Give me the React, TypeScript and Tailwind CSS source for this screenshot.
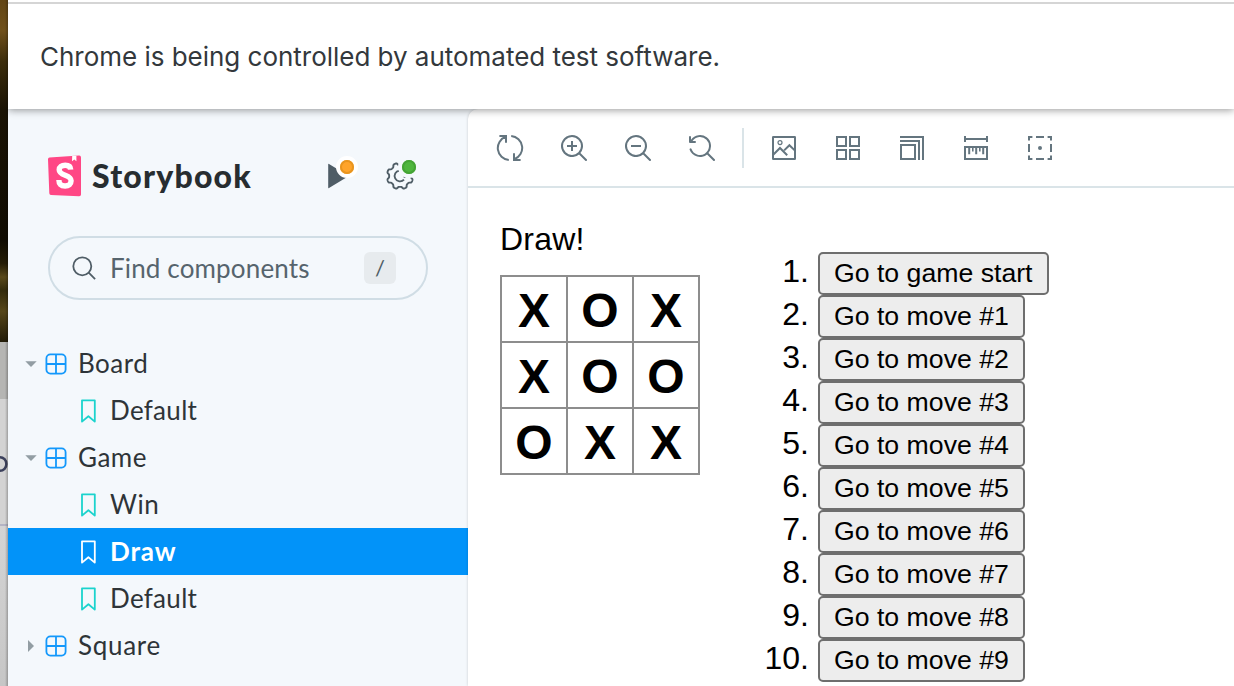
import type { ReactNode } from 'react';

function Icon({ children }: { children: ReactNode }) {
  return (
    <svg className="size-7 shrink-0" viewBox="0 0 14 14" fill="none" stroke="#64757f" strokeWidth="1">
      {children}
    </svg>
  );
}

function gearPath() {
  const pts: string[] = [];
  for (let i = 0; i <= 160; i++) {
    const a = (i / 160) * Math.PI * 2;
    const wave = Math.tanh(2 * Math.cos(8 * a + Math.PI)) / Math.tanh(2);
    const r = 12 + 1.15 * wave;
    pts.push(`${(14 + r * Math.cos(a)).toFixed(2)} ${(14 + r * Math.sin(a)).toFixed(2)}`);
  }
  return `M${pts.join('L')}Z`;
}

function Lens() {
  return (
    <path
      fill="#64757f"
      stroke="none"
      fillRule="evenodd"
      d="M9.544 10.206a5.5 5.5 0 11.662-.662.5.5 0 01.148.102l3 3a.5.5 0 01-.708.708l-3-3a.5.5 0 01-.102-.148zM10.5 6a4.5 4.5 0 11-9 0 4.5 4.5 0 019 0z"
    />
  );
}

function Toolbar() {
  return (
    <div className="flex h-[79px] shrink-0 items-center gap-9 border-b-2 border-[#dae4e8] pl-7">
      <Icon>
        <path d="M1.7 1H5v3.4M4.8 1.4A6 6 0 0 0 6.4 13M12.3 13H9V9.6M9.2 12.6A6 6 0 0 0 7.6 1" />
      </Icon>
      <Icon>
        <Lens />
        <path d="M6 3.5v5M3.5 6h5" />
      </Icon>
      <Icon>
        <Lens />
        <path d="M3.5 6h5" />
      </Icon>
      <Icon>
        <path
          fill="#64757f"
          stroke="none"
          d="M1.5 2.837V1.5a.5.5 0 00-1 0V4a.5.5 0 00.5.5h2.5a.5.5 0 000-1H2.258a4.5 4.5 0 11-.496 4.016.5.5 0 10-.942.337 5.502 5.502 0 008.724 2.353.5.5 0 00.102.148l3 3a.5.5 0 00.708-.708l-3-3a.5.5 0 00-.148-.102A5.5 5.5 0 101.5 2.837z"
        />
      </Icon>
      <div className="-mx-[10px] h-10 w-[2px] bg-[#dae4e8]" />
      <Icon>
        <rect x="1.5" y="1.5" width="11" height="11" rx=".1" />
        <circle cx="5" cy="4.3" r="1" strokeWidth=".6" />
        <path d="M1.6 10.4L5 7l3.6 3.6M7.1 8.2L9.7 5.6l2.8 2.7" />
      </Icon>
      <Icon>
        <path d="M1.5 1.5H6V6H1.5zM8 1.5h4.5V6H8zM1.5 8H6v4.5H1.5zM8 8h4.5v4.5H8z" />
      </Icon>
      <Icon>
        <path d="M1 1.5h11.5V13M1 3.5h9.5V13M1.5 5.5h7v7h-7z" />
      </Icon>
      <Icon>
        <path d="M1.5 1v3M12.5 1v3M1.5 2.5h11M1.5 6.5h11v6h-11zM3.6 6.5v3.6M7.1 6.5v3.6M10.6 6.5v3.6" />
        <path d="M5.4 6.5v2.2M8.9 6.5v2.2" strokeWidth=".8" />
      </Icon>
      <Icon>
        <path d="M1.5 3.2V1.5h1.7M10.8 1.5h1.7v1.7M12.5 10.8v1.7h-1.7M3.2 12.5H1.5v-1.7M5 1.5h4M5 12.5h4M1.5 5v4M12.5 5v4" />
        <circle cx="7" cy="7" r="1" fill="#64757f" stroke="none" />
      </Icon>
    </div>
  );
}

function ComponentRow({ name, nameClass, open = true }: { name: string; nameClass: string; open?: boolean }) {
  return (
    <div className="flex h-[47px] items-center pl-[17px]">
      <svg className="h-3 w-3" viewBox="0 0 12 12" fill="#929da3">
        {open ? <path d="M.3 3.3h11.4L6 9z" /> : <path d="M3 0l6 6-6 6z" />}
      </svg>
      <svg className="ml-2 size-[22px]" viewBox="0 0 22 22" fill="none" stroke="#1398fb" strokeWidth="1.8">
        <rect x="1.4" y="1.4" width="19.2" height="19.2" rx="4" />
        <path d="M11 1v20M1 11h20" />
      </svg>
      <span
        className={`ml-[11px] whitespace-nowrap pb-[2px] text-[26px] leading-none text-[#2e3438] ${nameClass}`}
      >
        {name}
      </span>
    </div>
  );
}

function StoryRow({ name, nameClass, selected = false }: { name: string; nameClass: string; selected?: boolean }) {
  return (
    <div className={`flex h-[47px] items-center pl-[73px] ${selected ? 'bg-[#0293f9]' : ''}`}>
      <svg className="h-6 w-[15px]" viewBox="0 0 15 24" fill="none" stroke={selected ? '#fff' : '#1bd3cd'} strokeWidth="1.8">
        <path d="M1 1.3h12.8v21.3L7.4 17.3 1 22.6z" strokeLinejoin="round" />
      </svg>
      <span
        className={`ml-[14px] whitespace-nowrap pb-[2px] text-[26px] leading-none ${selected ? 'font-bold text-white' : 'text-[#2e3438]'} ${nameClass}`}
      >
        {name}
      </span>
    </div>
  );
}

function Sidebar() {
  return (
    <aside className="flex w-[460px] shrink-0 flex-col font-[Lato,sans-serif]">
      <div className="mt-[45px] flex h-11 items-center pl-10">
        <svg className="h-[42px] w-[34px]" viewBox="0 0 34 42">
          <path d="M0 4.2Q0 2.7 1.5 2.6L31 .6Q33 .5 33 2.4V39.5Q33 41.4 31 41.3L3 40Q1.4 39.9 1.3 38.3Z" fill="#ff4785" />
          <path d="M24.2 1L28.4.7V6.2L26.3 4.6 24 6.3z" fill="#fff" />
          <path
            d="M22.7 14.6C22.6 11.3 20.6 10.2 17.2 10.2c-3.6 0-6 1.6-6 4.6 0 6.4 11.9 4.7 11.9 11 0 3.2-2.4 5.2-6 5.2-4.2 0-6.2-1.9-6.2-6"
            fill="none"
            stroke="#fff"
            strokeWidth="5.4"
          />
        </svg>
        <span className="ml-[10px] w-[160px] whitespace-nowrap text-[32px] font-black leading-none tracking-[1.2px] text-[#272d30]">
          Storybook
        </span>
        <div className="relative ml-[72px] h-7 w-7">
          <svg className="size-7" viewBox="0 0 28 28">
            <path d="M4.2 2.4Q4.2 1.5 5 2L24 13.4q1 .6 0 1.2L5 26q-.8.5-.8-.4z" fill="#4f5d66" />
          </svg>
          <span className="absolute -top-[6px] left-[12px] size-[22px] rounded-full border-4 border-white bg-[#ffa42a]">
            <span className="block size-full rounded-full border-2 border-[#e8951f]" />
          </span>
        </div>
        <div className="relative ml-[34px] h-7 w-7">
          <svg className="size-7" viewBox="0 0 28 28" fill="none" stroke="#4f5d66" strokeWidth="1.9">
            <path d={gearPath()} strokeLinejoin="round" />
            <path d="M13.4 8.6a5.4 5.4 0 1 0 4.6 9M18.4 15.8l.4-1.8" />
          </svg>
          <span className="absolute -top-[6px] left-[12px] size-[22px] rounded-full border-4 border-[#f4f8fc] bg-[#4eb63d]">
            <span className="block size-full rounded-full border-2 border-[#44a335]" />
          </span>
        </div>
      </div>
      <div className="ml-10 mt-[38px] flex h-16 w-[380px] items-center rounded-full border-2 border-[#d0dde5] pl-[22px]">
        <svg className="size-6" viewBox="0 0 24 24" fill="none" stroke="#4f5d66" strokeWidth="1.8">
          <circle cx="10.3" cy="10.3" r="9" />
          <path d="M16.7 16.7l6.4 6.4" />
        </svg>
        <span className="ml-[14px] w-[240px] whitespace-nowrap text-[26px] leading-none tracking-[0.15px] text-[#56646d]">
          Find components
        </span>
        <span className="ml-[14px] flex size-8 items-center justify-center rounded-[6px] bg-[#e7ebee] text-[22px] leading-none text-[#4f5d66]">
          /
        </span>
      </div>
      <nav className="mt-10 flex flex-col">
        <ComponentRow name="Board" nameClass="tracking-[0.5px]" />
        <StoryRow name="Default" nameClass="tracking-[0.3px]" />
        <ComponentRow name="Game" nameClass="tracking-[0.5px]" />
        <StoryRow name="Win" nameClass="tracking-[0.6px]" />
        <StoryRow name="Draw" nameClass="tracking-[0.9px]" selected />
        <StoryRow name="Default" nameClass="tracking-[0.3px]" />
        <ComponentRow name="Square" nameClass="tracking-[0.7px]" open={false} />
      </nav>
    </aside>
  );
}

const board = ['X', 'O', 'X', 'X', 'O', 'O', 'O', 'X', 'X'];
const moves = ['Go to game start', ...Array.from({ length: 9 }, (_, i) => `Go to move #${i + 1}`)];

function Game() {
  return (
    <div className="flex pl-8 font-['Liberation_Sans',Arial,sans-serif] text-black">
      <div className="w-[200px] pt-[32px]">
        <div className="h-[55px] text-[32px] leading-[38px] tracking-[0.2px]">Draw!</div>
        <div className="grid size-[200px] grid-cols-[66px_66px_66px] grid-rows-[66px_66px_66px] border-l-2 border-t-2 border-[#8d8d8d]">
          {board.map((mark, i) => (
            <button
              key={i}
              className="flex items-center justify-center border-b-2 border-r-2 border-[#8d8d8d] pt-[3px] text-[48px] font-bold leading-[61px]"
            >
              {mark}
            </button>
          ))}
        </div>
      </div>
      <ol className="ml-[60px] pt-16">
        {moves.map((label, i) => (
          <li key={label} className="flex h-[43px]">
            <span className="mr-[9px] w-[49px] text-right text-[32px] leading-[38px]">{i + 1}.</span>
            <button className="h-[43px] whitespace-nowrap rounded-[5px] border-2 border-[#6e6e6e] bg-[#ededed] px-[14px] pb-px text-[26.67px] leading-[38px]">
              {label}
            </button>
          </li>
        ))}
      </ol>
    </div>
  );
}

export default function App() {
  return (
    <div className="flex h-[686px] w-[1234px] overflow-hidden bg-white">
      <div className="relative z-20 flex w-2 shrink-0 flex-col overflow-hidden bg-[#d0d0d0]">
        <div className="h-[342px] bg-[linear-gradient(180deg,#624514_0%,#70501a_9%,#3d2d0c_18%,#1a1304_32%,#100c02_70%,#251d06_77%,#59491a_81%,#332b0b_85%,#574719_91%,#221b08_100%)]" />
        <div className="h-[57px] bg-[#b5b5b3]" />
        <div className="h-[125px] bg-[#d3d3d3]">
          <svg className="mt-[56px] h-[18px] w-2" viewBox="0 0 8 18" fill="none" stroke="#3c415c" strokeWidth="2.6">
            <ellipse cx="0" cy="9" rx="6.4" ry="6.8" />
          </svg>
        </div>
        <div className="h-[2px] bg-[#b4b4c4]" />
        <div className="flex-1 bg-[linear-gradient(180deg,#d4d4d4,#c6c6c6)]" />
        <div className="absolute inset-y-0 right-0 w-[3px] bg-linear-to-r from-transparent to-black/25" />
      </div>
      <div className="flex min-w-0 flex-1 flex-col">
        <header className="relative z-10 flex h-[109px] shrink-0 flex-col bg-white shadow-[0_1px_8px_rgba(0,0,0,0.42)]">
          <div className="mt-[2px] h-[2px] bg-[#d5d5d5]" />
          <p className="mt-[35px] whitespace-nowrap pl-8 font-[Inter,sans-serif] text-[26px] leading-9 tracking-[-0.02px] text-[#33383c]">
            Chrome is being controlled by automated test software.
          </p>
        </header>
        <div className="flex min-h-0 flex-1 bg-[#f4f8fc]">
          <Sidebar />
          <main className="flex min-w-0 flex-1 flex-col rounded-tl-[10px] bg-white shadow-[0_0_3px_rgba(0,0,0,0.18)]">
            <Toolbar />
            <Game />
          </main>
        </div>
      </div>
    </div>
  );
}
